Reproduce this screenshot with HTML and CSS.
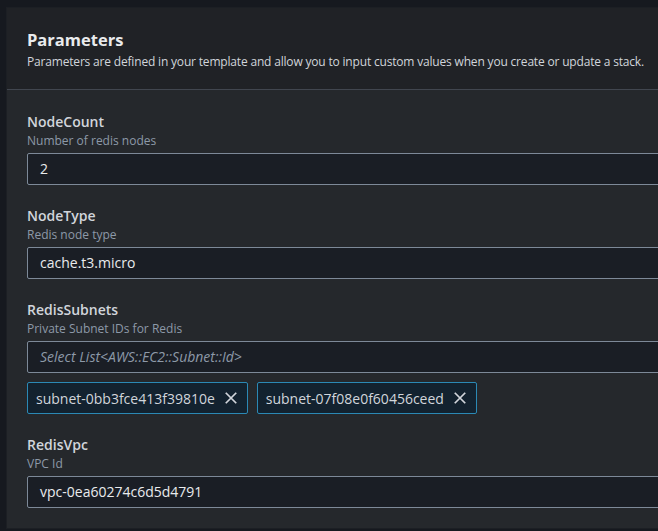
FILE: index.html
```html
<!DOCTYPE html>
<html lang="en">
<head>
<meta charset="utf-8">
<title>Parameters</title>
<link rel="stylesheet" href="styles.css">
</head>
<body>
<section class="panel">
  <header class="panel-header">
    <h2 class="panel-title">Parameters</h2>
    <p class="panel-desc">Parameters are defined in your template and allow you to input custom values when you create or update a stack.</p>
  </header>
  <div class="panel-body">
    <div class="field">
      <div class="field-label">NodeCount</div>
      <div class="field-hint">Number of redis nodes</div>
      <div class="input">2</div>
    </div>
    <div class="field">
      <div class="field-label">NodeType</div>
      <div class="field-hint">Redis node type</div>
      <div class="input">cache.t3.micro</div>
    </div>
    <div class="field">
      <div class="field-label">RedisSubnets</div>
      <div class="field-hint">Private Subnet IDs for Redis</div>
      <div class="input placeholder">Select List&lt;AWS::EC2::Subnet::Id&gt;</div>
      <div class="tokens">
        <div class="token">
          <span>subnet-0bb3fce413f39810e</span>
          <svg class="token-x" viewBox="0 0 16 16" width="14" height="14"><path d="M2 2 L14 14 M14 2 L2 14" stroke="currentColor" stroke-width="2" fill="none"/></svg>
        </div>
        <div class="token">
          <span>subnet-07f08e0f60456ceed</span>
          <svg class="token-x" viewBox="0 0 16 16" width="14" height="14"><path d="M2 2 L14 14 M14 2 L2 14" stroke="currentColor" stroke-width="2" fill="none"/></svg>
        </div>
      </div>
    </div>
    <div class="field">
      <div class="field-label">RedisVpc</div>
      <div class="field-hint">VPC Id</div>
      <div class="input">vpc-0ea60274c6d5d4791</div>
    </div>
  </div>
</section>
</body>
</html>
```

FILE: styles.css
```css
html, body {
  margin: 0;
  padding: 0;
  background: #16191f;
  overflow: hidden;
  height: 100%;
}

body {
  padding: 8px 0 0 7px;
  font-family: "Open Sans", "Noto Sans", sans-serif;
  color: #d1d5db;
}

.panel {
  width: 720px;
  background: #25282c;
  box-shadow: 0 0 0 1px #1c1f24;
}

.panel-header {
  background: #202226;
  padding: 20px 20px 19px 20px;
  border-bottom: 1px solid #41464f;
}

.panel-title {
  margin: 0;
  font-size: 16.5px;
  line-height: 24px;
  font-weight: 700;
  color: #e9ebed;
}

.panel-desc {
  margin: 2px 0 0 0;
  font-size: 12px;
  line-height: 16px;
  letter-spacing: -0.18px;
  color: #d1d5db;
}

.panel-body {
  padding: 21px 20px 20px 20px;
  display: flex;
  flex-direction: column;
  gap: 20px;
}

.field {
  display: flex;
  flex-direction: column;
}

.field-label {
  font-size: 14px;
  line-height: 22px;
  font-weight: 600;
  color: #d1d5db;
}

.field-hint {
  font-size: 12px;
  line-height: 16px;
  color: #8d99a8;
  margin-bottom: 4px;
}

.input {
  height: 32px;
  box-sizing: border-box;
  border: 1px solid #7d8998;
  border-radius: 2px;
  background: #1a1e25;
  padding: 0 12px;
  font-size: 14px;
  line-height: 30px;
  color: #e9ebed;
}

.input.placeholder {
  font-style: italic;
  color: #8d99a8;
}

.tokens {
  display: flex;
  gap: 9px;
  margin-top: 9px;
}

.token {
  display: flex;
  align-items: center;
  gap: 9px;
  height: 32px;
  box-sizing: border-box;
  border: 1px solid #2b89b5;
  border-radius: 2px;
  background: #13222f;
  padding: 0 9px 0 8px;
  font-size: 14px;
  color: #d1d5db;
}

.token-x {
  display: block;
  color: #d1d5db;
}
```
